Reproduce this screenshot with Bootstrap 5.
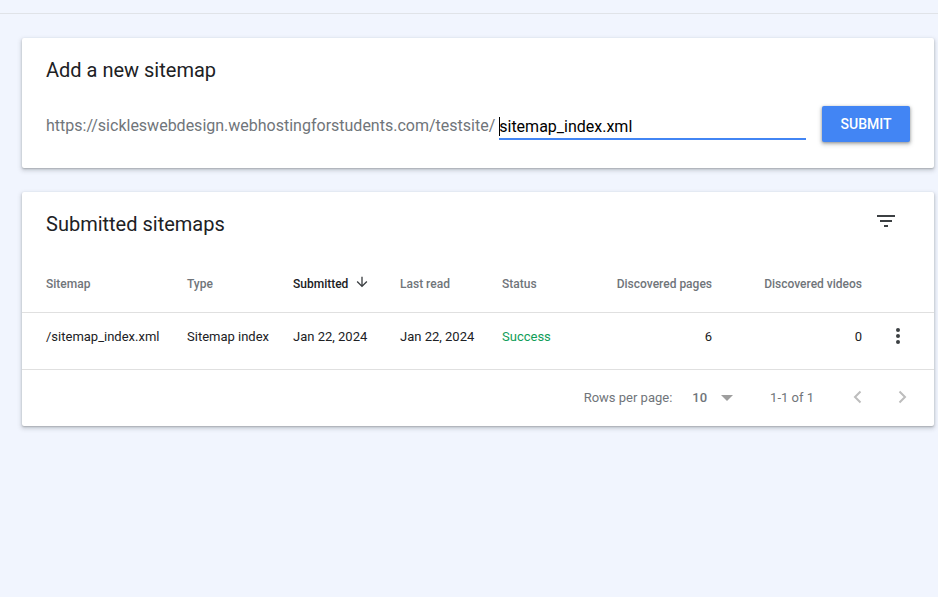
<!DOCTYPE html>
<html lang="en">
<head>
<meta charset="utf-8">
<title>Sitemaps</title>
<link href="https://cdn.jsdelivr.net/npm/bootstrap@5.3.0/dist/css/bootstrap.min.css" rel="stylesheet">
<style>
html,body{height:100%;}
body{background:#f1f5fe;font-family:Roboto,"Liberation Sans",sans-serif;overflow:hidden;color:#202124;}
.topline{height:14px;border-bottom:1px solid #e0e3e8;}
.page-wrap{padding:24px 4px 0 22px;display:flex;flex-direction:column;gap:24px;}
.panel{background:#fff;border-radius:2px;box-shadow:0 1px 2px rgba(60,64,67,.3),0 2px 4px 1px rgba(60,64,67,.18);}
.panel-add{height:130px;padding:20px 24px 0;}
.panel-title{font-size:20px;line-height:24px;font-weight:400;color:#202124;margin:0;}
.add-row{margin-top:19px;height:47px;}
.url-prefix{font-size:16px;line-height:20px;color:#70757a;white-space:nowrap;padding-top:15px;}
.field{width:307px;margin-left:4px;margin-top:5px;height:34px;border-bottom:2px solid #4285f4;position:relative;}
.field-input{border:0;outline:0;padding:8px 0 0 0;width:100%;height:32px;font:16px/20px Roboto,"Liberation Sans",sans-serif;color:#000;background:transparent;}
.caret-mark{position:absolute;left:0;top:11px;width:1px;height:19px;background:#000;}
.btn-submit{background:#4285f4;color:#fff;border:0;border-radius:2px;width:88px;height:36px;font-size:14px;font-weight:500;line-height:36px;padding:0;margin-left:16px;margin-top:5px;box-shadow:0 1px 3px rgba(60,64,67,.45),0 2px 4px 1px rgba(60,64,67,.2);}
.panel-list{height:234px;}
.list-head{height:66px;padding:20px 24px 0;}
.tool-btn{width:24px;height:24px;margin:-3px 12px 0 0;}
.data-table{table-layout:fixed;width:912px;margin:0;border-collapse:collapse;font-size:13px;}
.data-table th,.data-table td{padding:0;border:0;background:transparent;vertical-align:middle;box-shadow:none;}
.data-table thead th{height:54px;font-weight:500;font-size:12px;color:#70757a;padding-bottom:1px;border-bottom:1px solid #e0e0e0;}
.data-table thead th.sorted{color:#202124;}
.data-table tbody td{height:57px;color:#202124;padding-bottom:8px;border-bottom:1px solid #e0e0e0;}
.data-table .first-cell{padding-left:24px;}
.data-table tbody td.status-ok{color:#0f9d58;}
.arrow-ic{margin:-4px 0 -4px 6px;vertical-align:2px;}
.data-table tbody td.kebab-cell{padding-left:24px;}
.kebab-ic{display:block;margin-bottom:2px;}
.pager{height:56px;font-size:13px;color:#70757a;padding-right:23px;}
.pager-num{margin-left:20px;font-weight:500;}
.pager-drop{margin-left:14px;width:0;height:0;border-left:6px solid transparent;border-right:6px solid transparent;border-top:6px solid #9e9e9e;}
.pager-range{margin-left:37px;}
.pager-nav{margin-left:35px;margin-top:-2px;gap:26px;}
</style>
</head>
<body>
<div class="topline"></div>
<main class="page-wrap">
  <section class="panel panel-add">
    <h2 class="panel-title">Add a new sitemap</h2>
    <div class="add-row d-flex align-items-start">
      <span class="url-prefix">https://sickleswebdesign.webhostingforstudents.com/testsite/</span>
      <div class="field">
        <input class="field-input" type="text" value="sitemap_index.xml" aria-label="Sitemap URL">
        <span class="caret-mark"></span>
      </div>
      <button class="btn btn-submit" type="button">SUBMIT</button>
    </div>
  </section>

  <section class="panel panel-list">
    <div class="list-head d-flex justify-content-between align-items-start">
      <h2 class="panel-title">Submitted sitemaps</h2>
      <svg class="tool-btn" viewBox="0 0 24 24" fill="#3c4043" aria-label="Filter"><path d="M3 6h18v2H3zM6 11h12v2H6zM10 16h4v2h-4z"/></svg>
    </div>
    <table class="table data-table">
      <colgroup><col style="width:165px"><col style="width:106px"><col style="width:107px"><col style="width:102px"><col style="width:80px"><col style="width:130px"><col style="width:150px"><col style="width:72px"></colgroup>
      <thead>
        <tr>
          <th class="first-cell">Sitemap</th>
          <th>Type</th>
          <th class="sorted">Submitted<svg class="arrow-ic" width="16" height="16" viewBox="0 0 24 24" fill="#3c4043"><path d="M20 12l-1.41-1.41L13 16.17V4h-2v12.17l-5.58-5.59L4 12l8 8 8-8z"/></svg></th>
          <th>Last read</th>
          <th>Status</th>
          <th class="text-end">Discovered pages</th>
          <th class="text-end">Discovered videos</th>
          <th></th>
        </tr>
      </thead>
      <tbody>
        <tr>
          <td class="first-cell">/sitemap_index.xml</td>
          <td>Sitemap index</td>
          <td>Jan 22, 2024</td>
          <td>Jan 22, 2024</td>
          <td class="status-ok">Success</td>
          <td class="text-end">6</td>
          <td class="text-end">0</td>
          <td class="kebab-cell"><svg class="kebab-ic" width="24" height="24" viewBox="0 0 24 24" fill="#3c4043" aria-label="More"><circle cx="12" cy="6" r="2"/><circle cx="12" cy="12" r="2"/><circle cx="12" cy="18" r="2"/></svg></td>
        </tr>
      </tbody>
    </table>
    <div class="pager d-flex align-items-center justify-content-end">
      <span>Rows per page:</span>
      <span class="pager-num">10</span>
      <span class="pager-drop"></span>
      <span class="pager-range">1-1 of 1</span>
      <div class="pager-nav d-flex">
        <svg width="18" height="18" viewBox="0 0 18 18" fill="none" stroke="#bdbdbd" stroke-width="2"><path d="M11.5 3.500 6 9l5.500 5.500"/></svg>
        <svg width="18" height="18" viewBox="0 0 18 18" fill="none" stroke="#bdbdbd" stroke-width="2"><path d="M6.500 3.500 12 9l-5.500 5.500"/></svg>
      </div>
    </div>
  </section>
</main>
<script src="https://cdn.jsdelivr.net/npm/bootstrap@5.3.0/dist/js/bootstrap.bundle.min.js"></script>
</body>
</html>
